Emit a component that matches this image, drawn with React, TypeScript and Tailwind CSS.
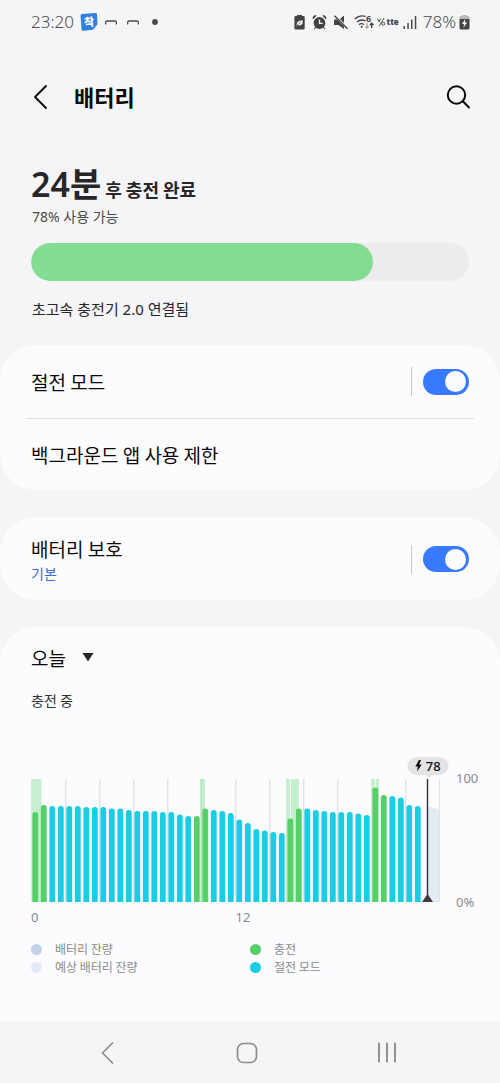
import React, { useState } from "react";

type Kind = "c" | "s";

// Top edge of every half-hour bar, measured down from the 100% line.
const BARS: Array<[number, Kind]> = [
  [33, "c"], [26, "c"], [27, "s"], [27, "s"], [27, "s"], [27, "s"], [28, "s"], [28, "s"],
  [28, "s"], [29.5, "s"], [29.5, "s"], [31, "s"], [32, "s"], [32, "s"], [32, "s"], [33, "s"],
  [33, "s"], [35.5, "s"], [37, "s"], [37, "c"], [29.5, "c"], [31, "s"], [32, "s"], [34, "s"],
  [40.5, "s"], [44, "s"], [50, "s"], [51.5, "s"], [53, "s"], [54, "s"], [39.5, "c"], [29.5, "c"],
  [29.5, "s"], [31, "s"], [32, "s"], [33, "s"], [33, "s"], [33, "s"], [34.5, "s"], [36, "s"],
  [8.5, "c"], [16, "c"], [17, "s"], [18.5, "s"], [26, "s"], [27, "s"],
];

const CHARGING: Array<[number, number]> = [
  [0.5, 10], [169.5, 4.5], [255, 4], [260, 8], [341, 3], [345, 3],
];

function Chart() {
  return (
    <svg viewBox="0 0 409 123" preserveAspectRatio="none" className="block h-[123px] w-full" role="img" aria-label="배터리 잔량">
      {Array.from({ length: 13 }, (_, i) => (
        <rect key={i} x={i * 34} y="0" width="1.5" height="123" fill="#e4e4e7" />
      ))}
      {CHARGING.map(([x, w]) => (
        <rect key={x} x={x} y="0" width={w} height="123" fill="#c5efce" />
      ))}
      <rect x="169.5" y="0" width="1.5" height="123" fill="#b4dfbe" />
      <path d="M397 27L408 30.5V123H397Z" fill="#e3eaf4" />
      {BARS.map(([top, kind], i) => {
        const x = 1.4 + i * 8.5;
        return (
          <path
            key={i}
            d={`M${x} 123V${top + 2.8}a2.9 2.8 0 0 1 5.8 0V123Z`}
            fill={kind === "c" ? "#55d069" : "#18cde4"}
          />
        );
      })}
      <rect x="395.8" y="0" width="1.4" height="123" fill="#303033" />
      <path d="M391 123L396.5 115L402 123Z" fill="#3c3c3f" />
    </svg>
  );
}

function Toggle({ id, label }: { id: string; label: string }) {
  const [on, setOn] = useState(true);
  return (
    <div className="flex items-center gap-[11px]">
      <span className="h-[29px] w-px bg-[#c8c8cb]" />
      <input
        id={id}
        type="checkbox"
        role="switch"
        aria-label={label}
        checked={on}
        onChange={(e) => setOn(e.target.checked)}
        className="flex h-[26px] w-[46px] cursor-pointer appearance-none items-center rounded-full bg-[#b5b5b9] px-[3px] before:block before:size-[21px] before:rounded-full before:bg-[#fcfcfe] before:content-[''] checked:justify-end checked:bg-[#387aff]"
      />
    </div>
  );
}

function StatusBar() {
  return (
    <div className="flex h-11 items-center justify-between pr-[30px] pl-[31px] font-['Noto_Sans','Noto_Sans_CJK_KR',sans-serif] text-[17px] leading-6 text-[#4a4a4c]">
      <div className="flex items-center">
        <span className="font-light">23:20</span>
        <span className="relative ml-[6px] flex h-[18px] w-[18px] items-center justify-center">
          <svg viewBox="0 0 18 18" className="absolute inset-0 size-full">
            <path d="M0.5 2.5Q0.5 1 2 1L15.5 0Q17 0 17 1.5L17.5 10Q17.500 11.500 16.500 12.500L13.500 16Q12.800 16.800 11.500 17L3.500 17.800Q1.800 18 1.600 16.500Z" fill="#2f80df" />
          </svg>
          <span className="relative -rotate-6 text-[11px] leading-4 font-black text-white">착</span>
        </span>
        <svg viewBox="0 0 54 18" className="ml-[7px] h-[18px] w-[54px]" fill="none" stroke="#4a4a4c" strokeWidth="1.300">
          <path d="M0.700 11.500V9Q0.700 8 2 8H10Q11.300 8 11.300 9V11.500M22.700 11.500V9Q22.700 8 24 8H32Q33.300 8 33.300 9V11.500" />
          <circle cx="50" cy="9" r="2.900" fill="#4a4a4c" stroke="none" />
        </svg>
      </div>
      <div className="flex items-center">
        <svg viewBox="0 0 54 18" className="h-[18px] w-[54px]" fill="#434345">
          <path d="M3 3V2h5v1h1.500q1.200 0 1.200 1.200V15q0 1.500-1.500 1.500H1.900Q.4 16.500.4 15V4.200Q.4 3 1.600 3Z" />
          <path d="M2.800 13.200Q1.800 7.200 8.600 7.200Q9.300 13 4.200 12.300Z" fill="#f5f5f7" />
          <path d="M3 13.200Q4.500 10.500 6.700 9.300" stroke="#434345" strokeWidth=".7" fill="none" />
          <circle cx="25.500" cy="10" r="5.900" />
          <path d="M19.200 5.800Q18.500 3 22 2.600ZM31.800 5.800Q32.500 3 29 2.600ZM21.500 14l-1.300 2.300M29.500 14l1.300 2.300" stroke="#434345" strokeWidth="1" />
          <path d="M25.500 6.500V10.300H28.700" fill="none" stroke="#f5f5f7" strokeWidth="1.300" />
          <path d="M40 6.500H43L50 13.500V16L44.500 12H40ZM46 6L50 2.500V10Z" />
          <path d="M40.500 2.800L53.500 15.800" stroke="#434345" strokeWidth="1.400" />
        </svg>
        <svg viewBox="0 0 20 18" className="ml-[6px] h-[18px] w-5" fill="none" stroke="#434345" strokeWidth="1.400">
          <path d="M0.800 6Q5.500 1.500 11.500 3.500M3 9Q7 5.600 11.500 8M5 11.600Q7.500 9.700 10 11.600" />
          <circle cx="7.600" cy="13.800" r="1" fill="#434345" stroke="none" />
          <path d="M13 10V15M11.300 13.300L13 15L14.700 13.300" stroke="#a9a9ac" />
          <path d="M17.700 15V10.500M15.900 12L17.700 10.200L19.500 12" />
          <text x="12" y="8.500" fontSize="9" fontWeight="700" fill="#434345" stroke="none">6</text>
        </svg>
        <span className="ml-[3px] flex items-center">
          <svg viewBox="0 0 9 12" className="h-3 w-[9px]" fill="none" stroke="#434345" strokeWidth=".9">
            <path d="M.5 2.500L2 6L3.500 2.500M2.200 10L7 2" />
            <circle cx="6.300" cy="7.700" r="1.500" />
          </svg>
          <span className="text-[8px] leading-3 font-black">tte</span>
        </span>
        <svg viewBox="0 0 14 18" className="ml-[4px] h-[18px] w-[14px]" fill="#4a4a4c">
          <path d="M.5 13h1.500v3H.5ZM4.300 10h1.500v6H4.300ZM8 6.500h1.500V16H8ZM11.800 3h1.500V16h-1.500Z" />
        </svg>
        <span className="ml-[6px] font-light">78%</span>
        <svg viewBox="0 0 11 18" className="ml-[3px] h-[18px] w-[11px]">
          <path d="M3.200 3V2h4.600v1h1.500q1.200 0 1.200 1.200V6H.5V4.200Q.5 3 1.700 3Z" fill="#b9b9bc" />
          <path d="M.5 6h10v9q0 1.500-1.500 1.500H2Q.5 16.500.5 15Z" fill="#434345" />
          <path d="M6.300 6L2.800 11H5L4.500 14.800L8.200 9.500H6Z" fill="#f5f5f7" />
        </svg>
      </div>
    </div>
  );
}

function Legend({ dot, text }: { dot: string; text: string }) {
  return (
    <li className="flex items-center gap-[13px]">
      <span className={`size-[11px] rounded-full ${dot}`} />
      {text}
    </li>
  );
}

export default function App() {
  return (
    <div className="flex min-h-screen flex-col bg-[#f5f5f7] font-['Noto_Sans','Noto_Sans_CJK_KR',sans-serif] text-[#0a0a0b]">
      <StatusBar />

      <header className="flex h-[106px] items-center pr-[29px] pl-[31px]">
        <button aria-label="뒤로" className="cursor-pointer">
          <svg viewBox="0 0 20 26" className="h-[26px] w-5" fill="none" stroke="#0a0a0b" strokeWidth="1.900" strokeLinecap="round" strokeLinejoin="round">
            <path d="M15 2L4 13L15 24" />
          </svg>
        </button>
        <h1 className="ml-[23px] flex-1 text-[22px] leading-8 font-bold">배터리</h1>
        <button aria-label="검색" className="cursor-pointer">
          <svg viewBox="0 0 26 26" className="size-[26px]" fill="none" stroke="#0a0a0b" strokeWidth="2" strokeLinecap="round">
            <circle cx="11.500" cy="11" r="8.700" />
            <path d="M17.800 17.300L24 23.500" />
          </svg>
        </button>
      </header>

      <section className="px-[31px] pt-[11px] pb-6">
        <p className="flex h-[46px] items-baseline gap-1 text-[#262628]">
          <span className="text-[34px] leading-[46px] font-semibold">24분</span>
          <span className="font-['Noto_Sans_CJK_KR',sans-serif] text-[18px] leading-[24px] font-semibold">후 충전 완료</span>
        </p>
        <p className="pl-px text-sm leading-5 text-[#4a4a4c]">78% 사용 가능</p>
        <div role="progressbar" aria-valuenow={78} aria-valuemin={0} aria-valuemax={100} aria-label="배터리 잔량" className="mt-4 h-[38px] overflow-hidden rounded-full bg-[#ececee]">
          <div className="h-full w-[78%] rounded-full bg-[#82dd92]" />
        </div>
        <p className="mt-4 pl-px text-[15px] leading-6 text-[#262628]">초고속 충전기 2.0 연결됨</p>
      </section>

      <main className="flex flex-1 flex-col gap-[27px] font-['Noto_Sans_CJK_KR',sans-serif]">
        <section className="rounded-[36px] bg-[#fcfcfe]">
          <div className="flex h-[73px] items-center justify-between px-[31px]">
            <label htmlFor="saver" className="text-[19px] leading-7">절전 모드</label>
            <Toggle id="saver" label="절전 모드" />
          </div>
          <hr className="mx-[26px] border-[#e0e0e2]" />
          <a href="#background" className="flex h-[71px] items-center px-[31px] text-[19px] leading-7">백그라운드 앱 사용 제한</a>
        </section>

        <section className="flex items-center justify-between rounded-[36px] bg-[#fcfcfe] px-[31px] pt-[18px] pb-[17px]">
          <label htmlFor="protect">
            <span className="block text-[19px] leading-7">배터리 보호</span>
            <span className="block text-sm leading-5 text-[#3b70d0]">기본</span>
          </label>
          <Toggle id="protect" label="배터리 보호" />
        </section>

        <section className="flex-1 rounded-t-[36px] bg-[#fcfcfe] px-[31px] pt-[17px] pb-11">
          <div className="relative w-fit">
            <select aria-label="기간" className="block h-7 cursor-pointer appearance-none bg-transparent pr-7 text-[19px] leading-7">
              <option>오늘</option>
            </select>
            <svg viewBox="0 0 12 9" className="pointer-events-none absolute top-[9px] right-0 h-[9px] w-3" fill="#262628">
              <path d="M0.500 0H11.500L6 8.500Z" />
            </svg>
          </div>
          <p className="mt-[18px] text-sm leading-5 text-[#333335]">충전 중</p>

          <div className="mt-[69px] -mr-[10px] flex font-['Noto_Sans',sans-serif] text-[13px] leading-[18px] text-[#8a8a8d]">
            <div className="flex-1">
              <div className="relative">
                <Chart />
                <div className="absolute bottom-full left-[97%] mb-1 flex h-[18px] w-[41px] -translate-x-1/2 items-center justify-center gap-[3px] rounded-full bg-[#e4e4e6] text-[13px] font-medium text-[#0a0a0b]">
                  <svg viewBox="0 0 8 12" className="h-3 w-2" fill="#0a0a0b">
                    <path d="M4.500 0L0.800 6.500H3.300L2.500 11.500L7.200 4.500H4.600L6.500 0Z" />
                  </svg>
                  78
                  <svg viewBox="0 0 6 3" className="absolute top-full left-[18px] h-[3px] w-[6px]" fill="#e4e4e6">
                    <path d="M0 0H6L3 3Z" />
                  </svg>
                </div>
              </div>
              <div className="mt-[6px] grid grid-cols-2">
                <span>0</span>
                <span>12</span>
              </div>
            </div>
            <div className="-mt-[10px] flex h-[142px] w-[39px] flex-col justify-between pl-[16px]">
              <span>100</span>
              <span>0%</span>
            </div>
          </div>

          <ul className="mt-[14px] grid grid-cols-2 text-xs leading-[18px] text-[#8a8a8d]">
            <Legend dot="bg-[#c3d2e8]" text="배터리 잔량" />
            <Legend dot="bg-[#55d069]" text="충전" />
            <Legend dot="bg-[#e3eaf4]" text="예상 배터리 잔량" />
            <Legend dot="bg-[#18cde4]" text="절전 모드" />
          </ul>
        </section>
      </main>

      <nav className="flex h-[62px] items-center justify-between pr-[100px] pl-[94px] text-[#8c8c8f]">
        <button aria-label="이전" className="cursor-pointer">
          <svg viewBox="0 0 26 26" className="size-[26px]" fill="none" stroke="currentColor" strokeWidth="1.700" strokeLinecap="round" strokeLinejoin="round">
            <path d="M18.500 4L8.500 14L18.500 24" />
          </svg>
        </button>
        <button aria-label="홈" className="cursor-pointer">
          <svg viewBox="0 0 26 26" className="size-[26px]" fill="none" stroke="currentColor" strokeWidth="1.700">
            <rect x="3.500" y="4.500" width="19" height="19" rx="6" />
          </svg>
        </button>
        <button aria-label="최근 앱" className="cursor-pointer">
          <svg viewBox="0 0 26 26" className="size-[26px]" fill="none" stroke="currentColor" strokeWidth="1.900" strokeLinecap="round">
            <path d="M5 4.500V22.500M13 4.500V22.500M21 4.500V22.500" />
          </svg>
        </button>
      </nav>
    </div>
  );
}
